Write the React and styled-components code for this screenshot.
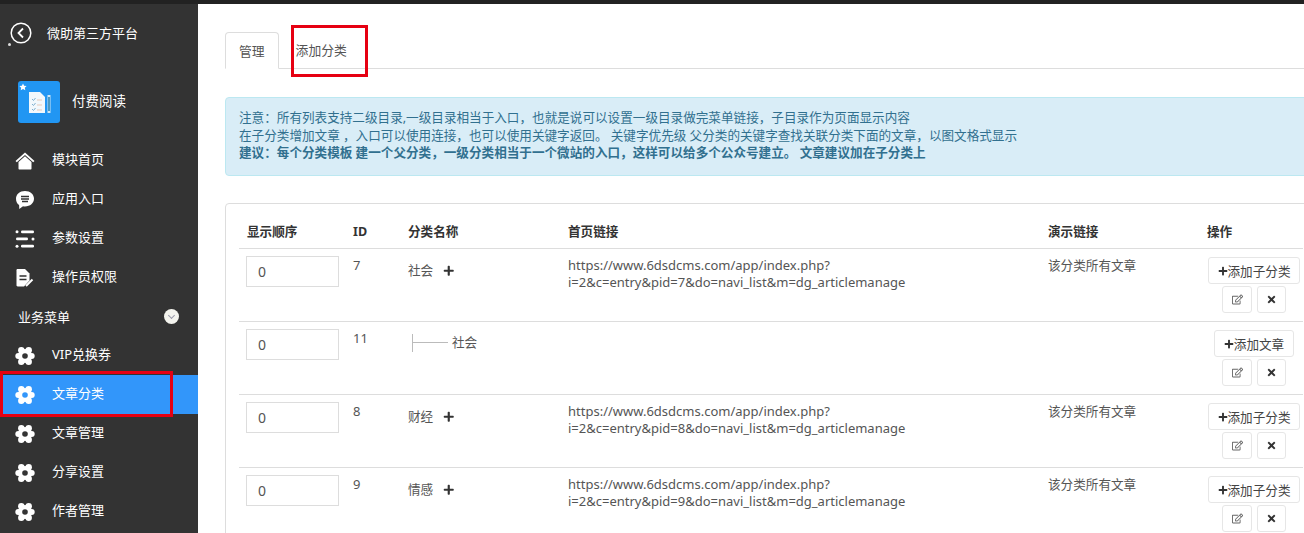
import React from "react";
import styled, { createGlobalStyle } from "styled-components";
import { FaPlus, FaTimes, FaRegEdit } from "react-icons/fa";

const FONT = `"Noto Sans", "Noto Sans CJK SC", sans-serif`;

const GlobalStyle = createGlobalStyle`
  html, body { margin: 0; padding: 0; height: 100%; overflow: hidden; background: #fff; }
  body { font-family: ${FONT}; font-size: 12.6px; color: #555; }
  * { box-sizing: border-box; }
`;

function HomeIcon() {
  return (
    <svg width="20" height="20" viewBox="0 0 20 20" fill="#fff">
      <path d="M10 1.500L19.500 10l-1.300 1.200L10 4 1.800 11.200.5 10z" />
      <path d="M10 5.300l6.500 5.700v6.600c0 .6-.4 1-1 1h-11c-.6 0-1-.4-1-1V11z" />
    </svg>
  );
}

function ChatIcon() {
  return (
    <svg width="20" height="20" viewBox="0 0 20 20">
      <path fill="#fff" d="M10 1c5.200 0 9 3.400 9 7.700s-3.800 7.700-9 7.700c-.7 0-1.400-.1-2-.2L4.300 19l-.2-3.900C2.200 13.700 1 11.400 1 8.700 1 4.400 4.800 1 10 1z" />
      <path stroke="#333" strokeWidth="1.300" d="M6 6.500h8M6 9h8M7 11.500h6" />
    </svg>
  );
}

function ListIcon() {
  return (
    <svg width="20" height="20" viewBox="0 0 20 20" fill="#fff">
      <circle cx="2" cy="2.800" r="1.500" />
      <rect x="6" y="1.500" width="13" height="2.700" rx="1.300" />
      <rect x="1" y="8.600" width="12" height="2.700" rx="1.300" />
      <circle cx="18" cy="10" r="1.500" />
      <circle cx="2" cy="17.200" r="1.500" />
      <rect x="6" y="15.800" width="13" height="2.700" rx="1.300" />
    </svg>
  );
}

function FileIcon() {
  return (
    <svg width="20" height="20" viewBox="0 0 20 20">
      <path fill="#fff" d="M1.500 2.200C1.500 1.500 2 1 2.700 1H10l4.500 4.500v7L9 18.500H2.700c-.7 0-1.200-.5-1.200-1.200z" />
      <path stroke="#333" strokeWidth="1.400" d="M4.500 8h7M4.500 11.500h7" />
      <path stroke="#fff" strokeWidth="2" d="M11 18l6.500-6.500" />
    </svg>
  );
}

function GearIcon({ hole }) {
  return (
    <svg width="20" height="20" viewBox="0 0 20 20" fill="#fff">
      <circle cx="6.300" cy="4.300" r="3.200" />
      <circle cx="13.700" cy="4.300" r="3.200" />
      <circle cx="3.300" cy="10" r="3" />
      <circle cx="16.700" cy="10" r="3" />
      <circle cx="6.300" cy="15.700" r="3.200" />
      <circle cx="13.700" cy="15.700" r="3.200" />
      <circle cx="10" cy="10" r="7" />
      <circle cx="10" cy="10" r="2.800" fill={hole} />
    </svg>
  );
}

function AppLogo() {
  return (
    <svg width="42" height="42" viewBox="0 0 42 42">
      <rect width="42" height="42" rx="3" fill="#2196f3" />
      <path fill="#fff" d="M5 2.500l1.100 2.300 2.500.3-1.800 1.700.5 2.500L5 8l-2.300 1.300.5-2.500L1.400 5.100l2.500-.3z" />
      <path fill="#f2f8fc" d="M11 11h11l5 5v16H11z" />
      <path stroke="#7fb0cf" strokeWidth="1" d="M14 18l1.500 1.500 2-2.500M14 23l1.500 1.500 2-2.500M14 28l1.500 1.500 2-2.500" fill="none" />
      <path stroke="#e6c9b8" strokeWidth="1" d="M19 19h5M19 24h5M19 29h5" />
      <rect x="29.500" y="14" width="3" height="18" fill="#cfe6f5" />
      <rect x="30.300" y="16" width="1.400" height="14" fill="#1677a8" />
    </svg>
  );
}

function BackIcon() {
  return (
    <svg width="22" height="22" viewBox="0 0 22 22" fill="none" stroke="#fff">
      <circle cx="11" cy="11" r="9.800" strokeWidth="1.500" />
      <path d="M13 6.500L8.500 11l4.500 4.500" strokeWidth="1.800" />
    </svg>
  );
}

const Page = styled.div`
  position: relative;
  width: 1304px;
  height: 533px;
  overflow: hidden;
  border-top: 4px solid #222;
  display: flex;
`;

const Sidebar = styled.aside`
  width: 198px;
  flex: none;
  background: #333;
  color: #fff;
  font-size: 13px;
`;

const BackRow = styled.div`
  position: relative;
  display: flex;
  align-items: center;
  height: 22px;
  margin-top: 18px;
  padding-left: 10px;
  gap: 15px;
  span { margin-top: -2px; }
  &::after {
    content: "";
    position: absolute;
    left: 8px;
    top: 21px;
    width: 3px;
    height: 3px;
    border-radius: 50%;
    background: #ddd;
  }
`;

const AppRow = styled.div`
  display: flex;
  align-items: center;
  gap: 12px;
  margin-top: 37px;
  padding-left: 18px;
  height: 42px;
  font-size: 13.500px;
  span { margin-top: -4px; }
`;

const NavList = styled.nav`
  margin-top: 18px;
`;

const NavItem = styled.div`
  display: flex;
  align-items: center;
  height: 39px;
  padding-left: 15px;
  gap: 17px;
  background: ${(p) => (p.$active ? "#3296fa" : "transparent")};
`;

const NavLabel = styled.span`
  margin-top: -5px;
`;

const GroupLabel = styled.span`
  margin-top: -1px;
`;

const NavIcon = styled.span`
  display: flex;
  width: 20px;
  height: 20px;
  align-items: center;
  justify-content: center;
`;

const GroupRow = styled.div`
  display: flex;
  align-items: center;
  justify-content: space-between;
  height: 39px;
  padding: 0 19px 0 18px;
`;

const GroupToggle = styled.span`
  width: 15px;
  height: 15px;
  border-radius: 50%;
  background: #f4f4ee;
  display: flex;
  align-items: center;
  justify-content: center;
  &::after {
    content: "";
    width: 4px;
    height: 4px;
    margin-top: -2px;
    border-right: 1px solid #99a;
    border-bottom: 1px solid #99a;
    transform: rotate(45deg);
  }
`;

const Main = styled.main`
  flex: none;
  width: 1120px;
  padding: 28px 0 0 27px;
`;

const Tabs = styled.div`
  display: flex;
  height: 37px;
  border-bottom: 1px solid #ddd;
`;

const Tab = styled.div`
  height: 37px;
  padding: 0 ${(p) => (p.$active ? "13px" : "15px")};
  margin-right: 2px;
  line-height: 36px;
  font-size: 12.800px;
  color: #555;
  ${(p) =>
    p.$active &&
    `
    background: #fff;
    border: 1px solid #ddd;
    border-bottom-color: #fff;
    border-radius: 4px 4px 0 0;
  `}
`;

const Alert = styled.div`
  margin-top: 28px;
  height: 79px;
  padding: 11px 13px;
  background: #d9edf7;
  border: 1px solid #bce8f1;
  border-radius: 4px;
  color: #31708f;
  line-height: 17.500px;
  b { font-weight: 700; }
`;

const Panel = styled.section`
  margin-top: 27px;
  padding: 10px 14px 0 13px;
  background: #fff;
  border: 1px solid #ddd;
  border-radius: 4px;
`;

const Row = styled.div`
  display: grid;
  grid-template-columns: 106px 55px 160px 480px 159px 110px;
  height: ${(p) => (p.$head ? "35px" : "73px")};
  border-bottom: 1px solid #ddd;
`;

const HeadCell = styled.div`
  padding: 0 8px;
  line-height: 36px;
  font-weight: 700;
  color: #333;
`;

const Cell = styled.div`
  padding: 8px 8px;
  line-height: 17px;
  color: #555;
`;

const LatinCell = styled(Cell)`
  font-size: 13px;
`;

const NameCell = styled(Cell)`
  padding-top: 13px;
  display: flex;
  align-items: flex-start;
  gap: 10px;
`;

const OrderInput = styled.input`
  width: 93px;
  height: 31px;
  margin: -1px 0 0 -1px;
  padding: 0 11px;
  border: 1px solid #ddd;
  font: 14px ${FONT};
  color: #555;
  background: #fff;
  outline: none;
`;

const PlusMark = styled.span`
  display: inline-flex;
  height: 17px;
  align-items: center;
  color: #333;
  font-size: 11.500px;
`;

const TreeLine = styled.span`
  display: block;
  width: 36px;
  height: 18px;
  margin: 0 4px 0 4px;
  border-left: 1px solid #bbb;
  position: relative;
  &::after {
    content: "";
    position: absolute;
    left: 0;
    right: 0;
    top: 8px;
    border-top: 1px solid #bbb;
  }
`;

const TreeCell = styled(Cell)`
  display: flex;
  padding-top: 12px;
  gap: 0;
`;

const ActionCell = styled.div`
  padding-top: 8px;
  display: flex;
  flex-direction: column;
  align-items: center;
  gap: 2px;
  margin-left: 8px;
  width: 94px;
`;

const Button = styled.span`
  display: inline-flex;
  align-items: center;
  justify-content: center;
  height: 27px;
  padding: 0 9px;
  background: #fff;
  border: 1px solid #e6e6e6;
  border-radius: 3px;
  color: #444;
  svg { font-size: 10px; color: #333; }
`;

const IconButtons = styled.div`
  display: flex;
  gap: 5px;
`;

const IconButton = styled(Button)`
  width: ${(p) => p.$w}px;
  padding: 0;
  svg { font-size: ${(p) => p.$size}px; color: ${(p) => p.$color}; }
`;

const RedBox = styled.div`
  position: absolute;
  border: 3px solid #e60012;
  pointer-events: none;
  left: ${(p) => p.$x}px;
  top: ${(p) => p.$y}px;
  width: ${(p) => p.$w}px;
  height: ${(p) => p.$h}px;
`;

const navTop = [
  { label: "模块首页", icon: <HomeIcon /> },
  { label: "应用入口", icon: <ChatIcon /> },
  { label: "参数设置", icon: <ListIcon /> },
  { label: "操作员权限", icon: <FileIcon /> },
];

const navBiz = ["VIP兑换券", "文章分类", "文章管理", "分享设置", "作者管理"];

const rows = [
  { id: 7, name: "社会", action: "添加子分类" },
  { id: 11, name: "社会", child: true, action: "添加文章" },
  { id: 8, name: "财经", action: "添加子分类" },
  { id: 9, name: "情感", action: "添加子分类" },
];

export default function App() {
  return (
    <Page>
      <GlobalStyle />
      <Sidebar>
        <BackRow>
          <BackIcon />
          <span>微助第三方平台</span>
        </BackRow>
        <AppRow>
          <AppLogo />
          <span>付费阅读</span>
        </AppRow>
        <NavList>
          {navTop.map((n) => (
            <NavItem key={n.label}>
              <NavIcon>{n.icon}</NavIcon>
              <NavLabel>{n.label}</NavLabel>
            </NavItem>
          ))}
          <GroupRow>
            <GroupLabel>业务菜单</GroupLabel>
            <GroupToggle />
          </GroupRow>
          {navBiz.map((label) => {
            const active = label === "文章分类";
            return (
              <NavItem key={label} $active={active}>
                <NavIcon><GearIcon hole={active ? "#3296fa" : "#333"} /></NavIcon>
                <NavLabel>{label}</NavLabel>
              </NavItem>
            );
          })}
        </NavList>
      </Sidebar>
      <Main>
        <Tabs>
          <Tab $active>管理</Tab>
          <Tab>添加分类</Tab>
        </Tabs>
        <Alert>
          注意：所有列表支持二级目录,一级目录相当于入口，也就是说可以设置一级目录做完菜单链接，子目录作为页面显示内容
          <br />
          在子分类增加文章 ，入口可以使用连接，也可以使用关键字返回。 关键字优先级 父分类的关键字查找关联分类下面的文章，以图文格式显示
          <br />
          <b>建议：每个分类模板 建一个父分类，一级分类相当于一个微站的入口，这样可以给多个公众号建立。 文章建议加在子分类上</b>
        </Alert>
        <Panel>
          <Row $head>
            <HeadCell>显示顺序</HeadCell>
            <HeadCell>ID</HeadCell>
            <HeadCell>分类名称</HeadCell>
            <HeadCell>首页链接</HeadCell>
            <HeadCell>演示链接</HeadCell>
            <HeadCell>操作</HeadCell>
          </Row>
          {rows.map((r) => (
            <Row key={r.id}>
              <Cell><OrderInput defaultValue="0" /></Cell>
              <LatinCell>{r.id}</LatinCell>
              {r.child ? (
                <TreeCell><TreeLine />{r.name}</TreeCell>
              ) : (
                <NameCell>{r.name}<PlusMark><FaPlus /></PlusMark></NameCell>
              )}
              <LatinCell>
                {!r.child && (
                  <>
                    https://www.6dsdcms.com/app/index.php?
                    <br />
                    i=2&amp;c=entry&amp;pid={r.id}&amp;do=navi_list&amp;m=dg_articlemanage
                  </>
                )}
              </LatinCell>
              <Cell>{!r.child && "该分类所有文章"}</Cell>
              <ActionCell>
                <Button><FaPlus />{r.action}</Button>
                <IconButtons>
                  <IconButton $w={30} $size={11} $color="#666"><FaRegEdit /></IconButton>
                  <IconButton $w={29} $size={11} $color="#333"><FaTimes /></IconButton>
                </IconButtons>
              </ActionCell>
            </Row>
          ))}
        </Panel>
      </Main>
      <RedBox $x={0} $y={367} $w={173} $h={46} />
      <RedBox $x={291} $y={21} $w={77} $h={52} />
    </Page>
  );
}
